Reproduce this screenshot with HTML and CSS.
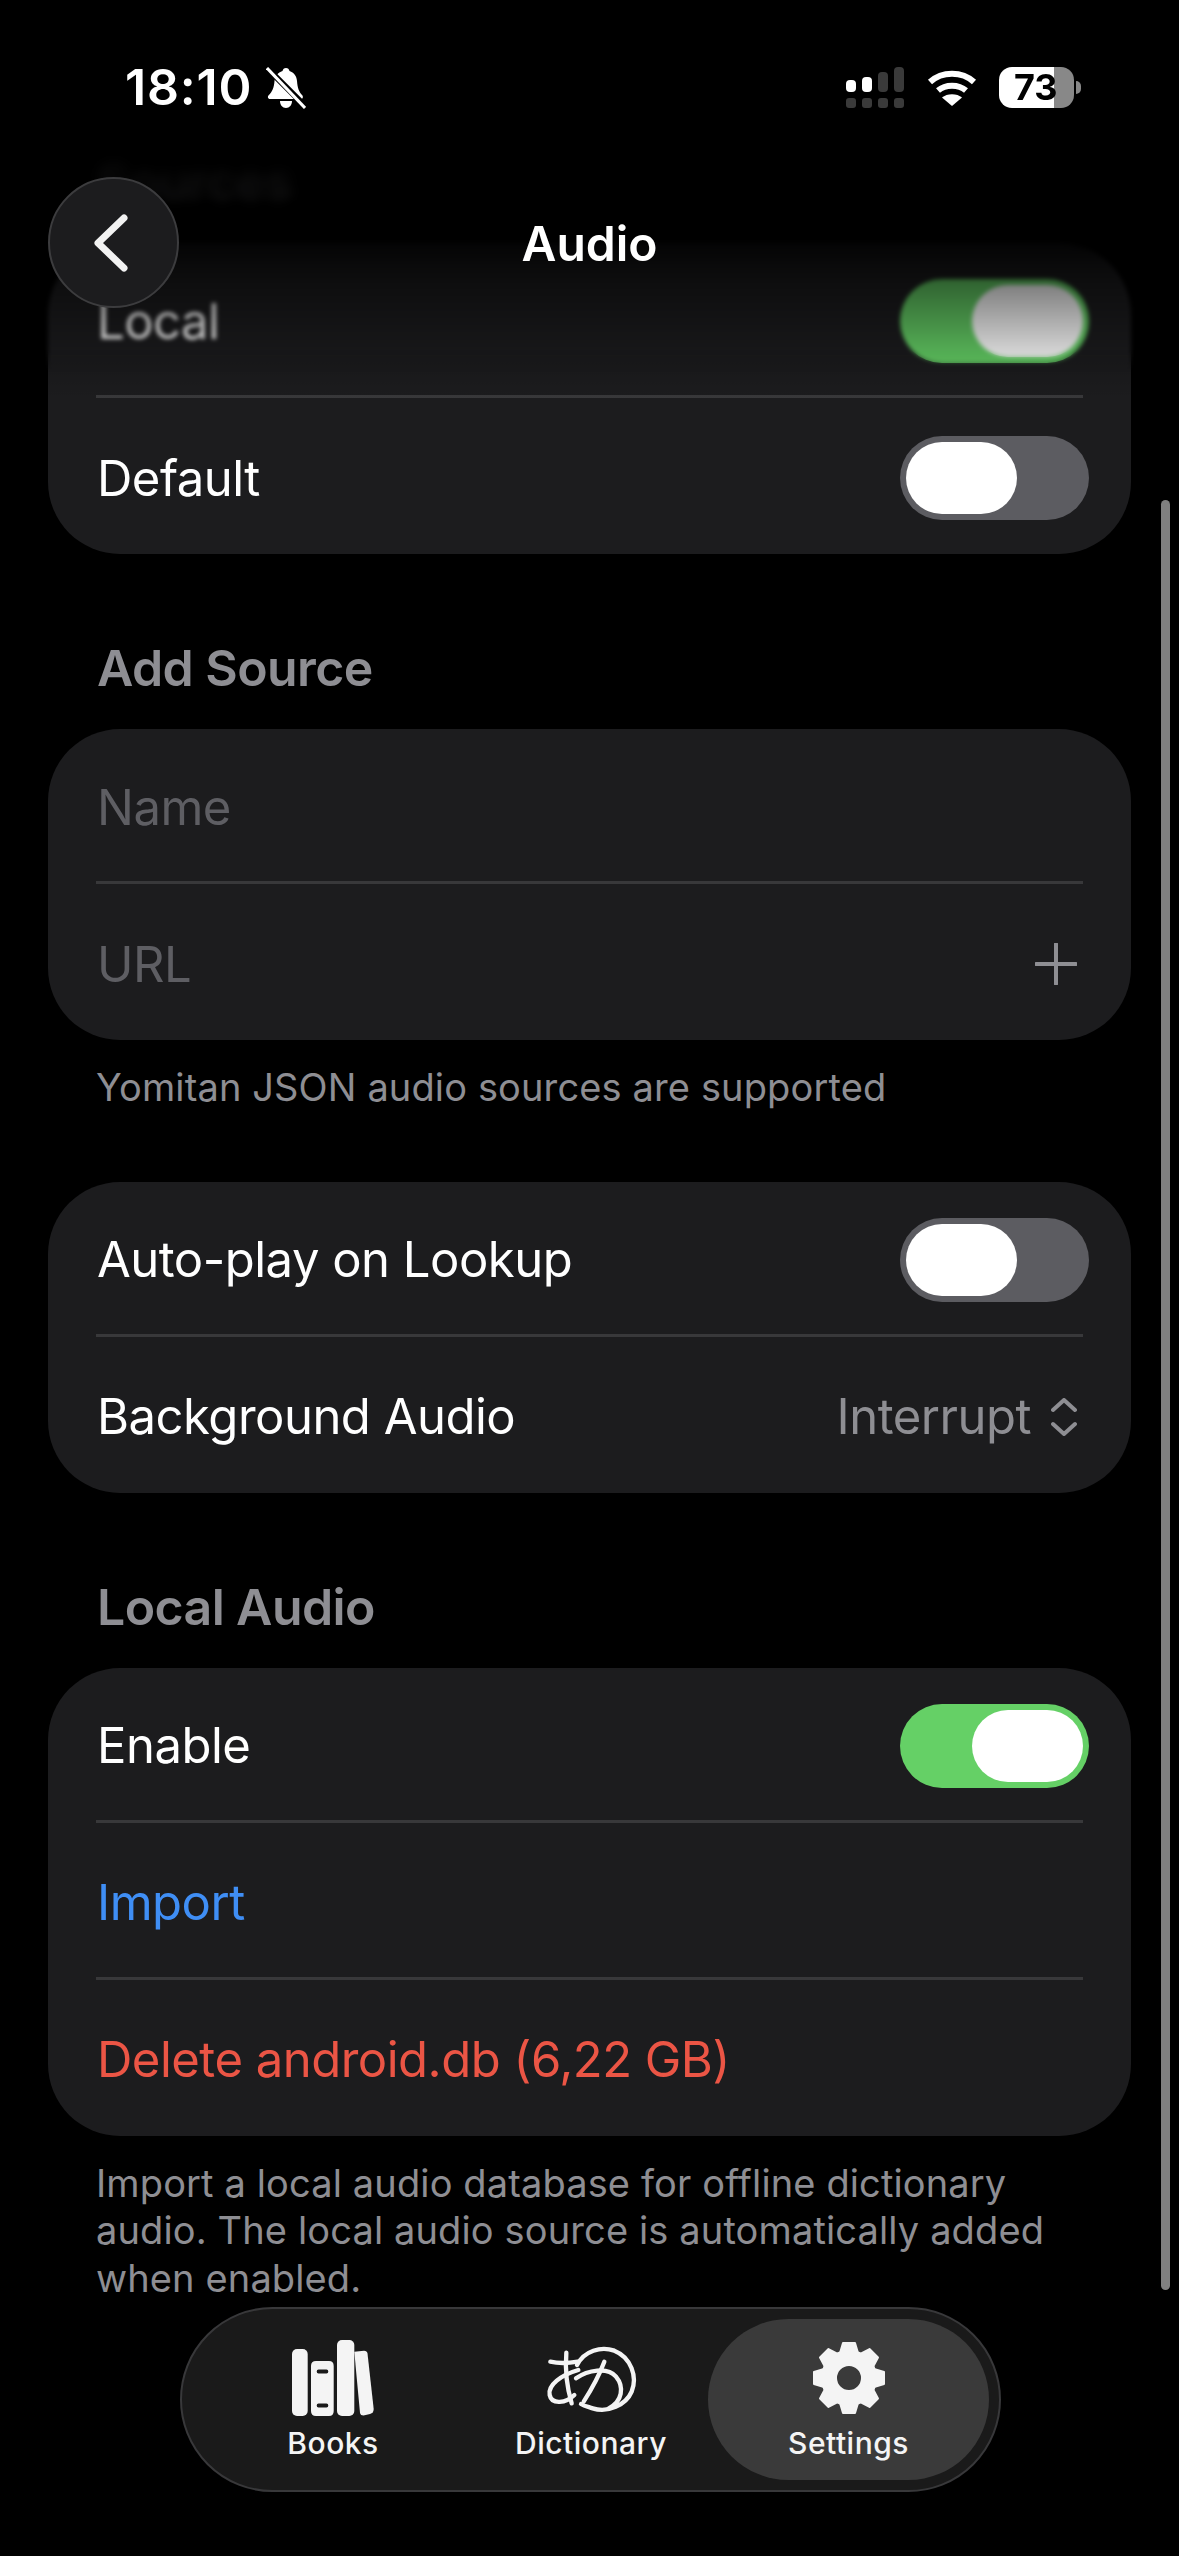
FILE: index.html
```html
<!DOCTYPE html>
<html lang="en">
<head>
    <meta charset="UTF-8">
    <meta name="viewport" content="width=device-width, initial-scale=1.0">
    <title>Audio</title>
    <link rel="stylesheet" href="styles.css">
</head>
<body>
    <main class="content">
        <h2 class="section-title">Sources</h2>
        <section class="card">
            <div class="row">
                <span>Local</span>
                <span class="toggle on"></span>
            </div>
            <div class="divider"></div>
            <div class="row">
                <span>Default</span>
                <span class="toggle"></span>
            </div>
        </section>

        <h2 class="section-title spaced">Add Source</h2>
        <section class="card">
            <div class="row">
                <span class="placeholder">Name</span>
            </div>
            <div class="divider"></div>
            <div class="row wide">
                <span class="placeholder">URL</span>
                <svg class="plus" viewBox="0 0 42 42">
                    <path d="M21 1V41M1 21H41"/>
                </svg>
            </div>
        </section>
        <p class="note">Yomitan JSON audio sources are supported</p>

        <section class="card after-note">
            <div class="row">
                <span>Auto-play on Lookup</span>
                <span class="toggle"></span>
            </div>
            <div class="divider"></div>
            <div class="row wide">
                <span>Background Audio</span>
                <span class="picker">
                    Interrupt
                    <svg class="updown" viewBox="0 0 26 38">
                        <path d="M2 12L13 2L24 12M2 26L13 36L24 26"/>
                    </svg>
                </span>
            </div>
        </section>

        <h2 class="section-title spaced">Local Audio</h2>
        <section class="card">
            <div class="row">
                <span>Enable</span>
                <span class="toggle on"></span>
            </div>
            <div class="divider"></div>
            <div class="row">
                <span class="link">Import</span>
            </div>
            <div class="divider"></div>
            <div class="row">
                <span class="danger">Delete android.db (6,22 GB)</span>
            </div>
        </section>
        <p class="note">Import a local audio database for offline dictionary audio. The local audio source is automatically added when enabled.</p>
    </main>

    <div class="top-fade"></div>

    <header class="status-bar">
        <div class="status-left">
            <span class="time">18:10</span>
            <svg class="bell" viewBox="0 0 40 42">
                <path class="bell-body" d="M20 1C22 1 23 2 23.500 4C28 5.500 30.500 9 31 14C31.500 21 33 25 36 28C37.500 29.500 37 32 35 32H4C2 32 1 29.500 3 28C6 25 8 21 8.500 14C9 9 12 5.500 16.500 4C17 2 18 1 20 1ZM14 34H26C26 38 23.500 41 20 41C16.500 41 14 38 14 34Z"/>
                <path d="M0 0L40 40" stroke="#000" stroke-width="6"/>
                <path d="M1 1L39 41" stroke="#fff" stroke-width="3"/>
            </svg>
        </div>
        <div class="status-right">
            <svg class="signal" viewBox="0 0 58 41">
                <rect x="0" y="13" width="10" height="12" rx="4" fill="#fff"/>
                <rect x="16" y="10" width="10" height="15" rx="4" fill="#fff"/>
                <rect x="32" y="5" width="10" height="20" rx="4" fill="#3a3a3a"/>
                <rect x="48" y="0" width="10" height="25" rx="4" fill="#3a3a3a"/>
                <rect x="0" y="31" width="10" height="10" rx="3" fill="#3a3a3a"/>
                <rect x="16" y="31" width="10" height="10" rx="3" fill="#3a3a3a"/>
                <rect x="32" y="31" width="10" height="10" rx="3" fill="#3a3a3a"/>
                <rect x="48" y="31" width="10" height="10" rx="3" fill="#3a3a3a"/>
            </svg>
            <svg class="wifi" viewBox="0 0 50 37">
                <path d="M3 13C15 2 35 2 47 13M11 21.500C18.500 15 31.500 15 39 21.500" fill="none" stroke="#fff" stroke-width="6"/>
                <path d="M25 37L15 28.500C20 24 30 24 35 28.500Z" fill="#fff"/>
            </svg>
            <div class="battery"><span>73</span></div>
            <span class="battery-nub"></span>
        </div>
    </header>

    <button class="back-button">
        <svg viewBox="0 0 36 58">
            <path d="M32 4L6 29L32 54"/>
        </svg>
    </button>
    <div class="nav-title">Audio</div>

    <div class="scrollbar"></div>

    <nav class="tab-bar">
        <div class="tab">
            <svg class="tab-icon books" viewBox="0 0 82 76">
                <rect x="0" y="9" width="15.700" height="67" rx="5" fill="#f4f4f4"/>
                <path fill-rule="evenodd" fill="#f4f4f4" d="M24 21H37Q41.700 21 41.700 26V71Q41.700 76 37 76H24Q19 76 19 71V26Q19 21 24 21ZM26.500 29.500Q24.700 29.500 24.700 31.500Q24.700 33.500 26.500 33.500H34.500Q36.300 33.500 36.300 31.500Q36.300 29.500 34.500 29.500ZM26.500 63.500Q24.700 63.500 24.700 65.500Q24.700 67.500 26.500 67.500H34.500Q36.300 67.500 36.300 65.500Q36.300 63.500 34.500 63.500Z"/>
                <rect x="45" y="0" width="17.300" height="76" rx="5" fill="#f4f4f4"/>
                <path fill="#f4f4f4" d="M62.300 11.700L72 10.700Q75 10.700 75.500 13.500L81.700 69Q81.700 73 78 74L71.500 75.500Q68.500 75.500 68 73Z"/>
            </svg>
            <span>Books</span>
        </div>
        <div class="tab">
            <svg class="tab-icon dict" viewBox="66 60 288 228">
                <g fill="none" stroke="#f4f4f4" stroke-width="13" stroke-linecap="round">
                    <path d="M88 125C110 130 140 130 170 125"/>
                    <path d="M136 98C132 150 140 210 152 250"/>
                    <path d="M172 150C120 165 80 195 86 225C92 255 135 250 160 225"/>
                    <path d="M168 135C190 92 240 78 280 92C330 112 350 170 332 215C315 255 260 280 215 265C200 260 190 258 180 252"/>
                    <path d="M250 125C235 165 210 210 188 245"/>
                    <path d="M165 175C200 150 260 140 285 170C310 200 305 245 262 266"/>
                </g>
            </svg>
            <span>Dictionary</span>
        </div>
        <div class="tab active">
            <svg class="tab-icon gear" viewBox="-38 -38 76 76">
                <defs>
                    <path id="tooth" d="M-9 -25L-6 -35H6L9 -25Z" fill="#f4f4f4" stroke="#f4f4f4" stroke-width="2" stroke-linejoin="round"/>
                </defs>
                <use href="#tooth"/>
                <use href="#tooth" transform="rotate(45)"/>
                <use href="#tooth" transform="rotate(90)"/>
                <use href="#tooth" transform="rotate(135)"/>
                <use href="#tooth" transform="rotate(180)"/>
                <use href="#tooth" transform="rotate(225)"/>
                <use href="#tooth" transform="rotate(270)"/>
                <use href="#tooth" transform="rotate(315)"/>
                <circle r="20" fill="none" stroke="#f4f4f4" stroke-width="16"/>
            </svg>
            <span>Settings</span>
        </div>
    </nav>
</body>
</html>
```

FILE: styles.css
```css
* {
    box-sizing: border-box;
}
html, body {
    margin: 0;
    padding: 0;
}
body {
    position: relative;
    width: 1179px;
    height: 2556px;
    overflow: hidden;
    background-color: #000;
    color: #fff;
    font-family: Inter, "Liberation Sans", sans-serif;
    font-size: 49px;
    letter-spacing: -0.5px;
}

/* scrolling content */
.content {
    padding: 152px 48px 0;
}
.section-title {
    margin: 0 0 31px;
    padding-left: 49px;
    height: 60px;
    line-height: 60px;
    font-size: 50px;
    font-weight: 600;
    letter-spacing: -0.6px;
    color: #8e8e93;
}
.section-title.spaced {
    margin-top: 84px;
}
.card {
    background-color: #1c1c1e;
    border-radius: 72px;
}
.card.after-note {
    margin-top: 70px;
}
.row {
    display: flex;
    align-items: center;
    justify-content: space-between;
    height: 154px;
    padding: 2px 42px 0 49px;
}
.row.wide {
    padding-right: 54px;
}
.divider {
    height: 3px;
    margin: -2px 48px 2px;
    background-color: #38383a;
}
.placeholder {
    color: #5e5e63;
}
.link {
    color: #3f8ef5;
}
.danger {
    color: #eb5545;
}
.note {
    margin: 24px 0 0;
    padding: 0 48px;
    font-size: 38px;
    line-height: 47.500px;
    letter-spacing: 0.13px;
    color: #8e8e93;
}
.picker {
    display: flex;
    align-items: center;
    gap: 20px;
    color: #8e8e93;
}
.updown {
    width: 26px;
    height: 38px;
}
.updown path, .plus path {
    fill: none;
    stroke: #8e8e93;
    stroke-width: 4;
    stroke-linecap: round;
    stroke-linejoin: round;
}
.plus {
    width: 42px;
    height: 42px;
}
.toggle {
    position: relative;
    width: 189px;
    height: 84px;
    border-radius: 42px;
    background-color: #5c5c61;
}
.toggle::after {
    content: "";
    position: absolute;
    left: 6px;
    top: 6px;
    width: 111px;
    height: 72px;
    border-radius: 36px;
    background-color: #fff;
}
.toggle.on {
    background-color: #65d066;
}
.toggle.on::after {
    left: auto;
    right: 6px;
}

/* blurred fade under the nav */
.top-fade {
    position: absolute;
    left: 0;
    top: 0;
    width: 100%;
    height: 420px;
    background: linear-gradient(to bottom, #000 0, #000 130px, rgba(0,0,0,0.88) 190px, rgba(0,0,0,0.8) 245px, rgba(0,0,0,0.5) 285px, rgba(0,0,0,0.18) 350px, rgba(0,0,0,0) 400px);
}
.top-fade::before, .top-fade::after {
    content: "";
    position: absolute;
    left: 0;
    top: 0;
    width: 100%;
    height: 100%;
}
.top-fade::before {
    -webkit-backdrop-filter: blur(6px);
    backdrop-filter: blur(6px);
    -webkit-mask-image: linear-gradient(to bottom, #000 200px, transparent 260px);
    mask-image: linear-gradient(to bottom, #000 200px, transparent 260px);
}
.top-fade::after {
    -webkit-backdrop-filter: blur(2px);
    backdrop-filter: blur(2px);
    -webkit-mask-image: linear-gradient(to bottom, #000 350px, transparent 372px);
    mask-image: linear-gradient(to bottom, #000 350px, transparent 372px);
}

/* status bar */
.status-bar {
    position: absolute;
    left: 125px;
    top: 67px;
    width: 956px;
    height: 41px;
    display: flex;
    justify-content: space-between;
}
.status-left {
    display: flex;
    align-items: center;
    gap: 14px;
}
.time {
    font-size: 50px;
    font-weight: 600;
    letter-spacing: 0.8px;
    line-height: 41px;
}
.bell {
    width: 40px;
    height: 42px;
}
.bell-body {
    fill: #fff;
}
.status-right {
    display: flex;
    align-items: center;
}
.signal {
    width: 58px;
    height: 41px;
    margin-right: 23px;
}
.wifi {
    width: 50px;
    height: 37px;
    margin-right: 22px;
}
.battery {
    width: 75px;
    height: 41px;
    border-radius: 13px;
    background: linear-gradient(to right, #fff 55px, #888 55px);
    color: #000;
    font-size: 36px;
    font-weight: 700;
    letter-spacing: 0;
    line-height: 41px;
    padding-left: 15px;
}
.battery-nub {
    width: 5px;
    height: 13px;
    margin-left: 2px;
    border-radius: 0 6px 6px 0;
    background-color: #888;
}

/* nav */
.back-button {
    position: absolute;
    left: 48px;
    top: 177px;
    width: 131px;
    height: 131px;
    padding: 0;
    border: 2px solid #3c3c3e;
    border-radius: 50%;
    background-color: #1c1c1e;
    display: flex;
    align-items: center;
    justify-content: center;
}
.back-button svg {
    width: 36px;
    height: 58px;
    margin-right: 8px;
}
.back-button path {
    fill: none;
    stroke: #f2f2f2;
    stroke-width: 7;
    stroke-linecap: round;
    stroke-linejoin: round;
}
.nav-title {
    position: absolute;
    left: 0;
    top: 214px;
    width: 100%;
    text-align: center;
    font-size: 48px;
    font-weight: 600;
    letter-spacing: 0;
    line-height: 60px;
}
.scrollbar {
    position: absolute;
    left: 1161px;
    top: 500px;
    width: 9px;
    height: 1790px;
    border-radius: 5px;
    background-color: #808080;
}

/* bottom tabs */
.tab-bar {
    position: absolute;
    left: 180px;
    top: 2307px;
    width: 821px;
    height: 185px;
    padding: 10px 10px 10px 22px;
    display: flex;
    align-items: stretch;
    border: 2px solid #38383a;
    border-radius: 93px;
    background-color: #1a1a1a;
}
.tab {
    flex: 0 0 258px;
    display: flex;
    flex-direction: column;
    align-items: center;
    justify-content: flex-end;
    padding-bottom: 17px;
    font-size: 30px;
    font-weight: 500;
    letter-spacing: 0.5px;
    line-height: 40px;
    color: #f4f4f4;
    border-radius: 81px;
}
.tab.active {
    flex: 0 0 281px;
    margin-left: -12px;
    background-color: #3a3a3a;
}
.tab-icon {
    height: 76px;
    margin-bottom: 7px;
}
.books {
    width: 82px;
}
.dict {
    width: 96px;
}
.gear {
    width: 76px;
}
```
